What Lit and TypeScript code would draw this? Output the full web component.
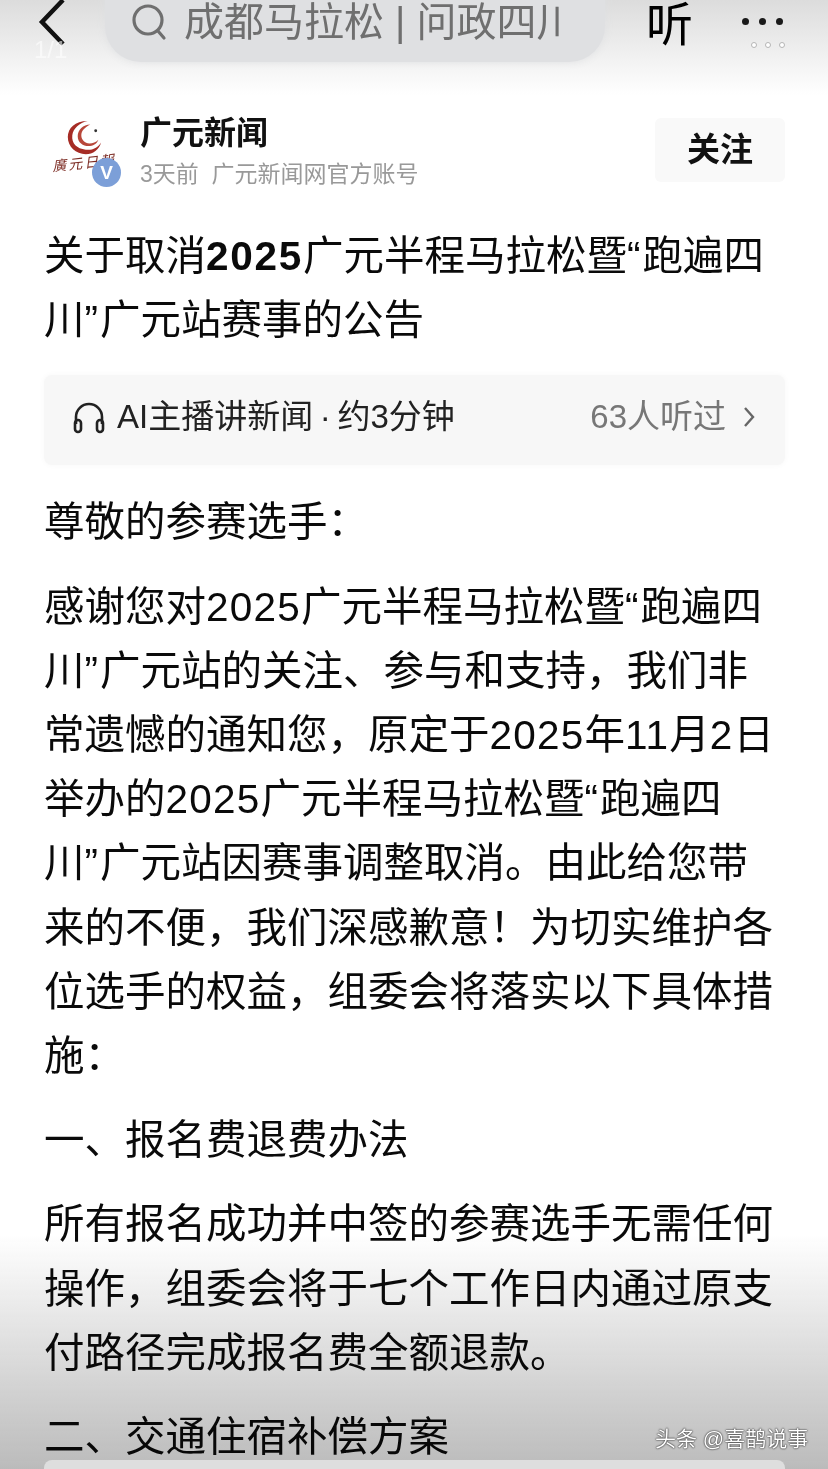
import { LitElement, html, css } from 'lit';
import { customElement } from 'lit/decorators.js';

const SECTIONS = [
  { gap: false, lines: ['尊敬的参赛选手：'] },
  {
    gap: true,
    lines: [
      '感谢您对2025广元半程马拉松暨“跑遍四',
      '川”广元站的关注、参与和支持，我们非',
      '常遗憾的通知您，原定于2025年11月2日',
      '举办的2025广元半程马拉松暨“跑遍四',
      '川”广元站因赛事调整取消。由此给您带',
      '来的不便，我们深感歉意！为切实维护各',
      '位选手的权益，组委会将落实以下具体措',
      '施：',
    ],
  },
  { gap: true, lines: ['一、报名费退费办法'] },
  {
    gap: true,
    lines: [
      '所有报名成功并中签的参赛选手无需任何',
      '操作，组委会将于七个工作日内通过原支',
      '付路径完成报名费全额退款。',
    ],
  },
  { gap: true, lines: ['二、交通住宿补偿方案'] },
];

// digits and quotes run a bit wider in the source than in Liberation Sans
function spaced(text: string) {
  return text.split(/([0-9]+|[“”])/).map((part) => {
    if (/^[0-9]+$/.test(part)) return html`<span class="num">${part}</span>`;
    if (part === '“' || part === '”') return html`<span class="quote">${part}</span>`;
    return part;
  });
}

@customElement('app-root')
export class AppRoot extends LitElement {
  static styles = css`
    :host {
      display: block;
      position: relative;
      width: 828px;
      height: 1469px;
      overflow: hidden;
      background: linear-gradient(#dcdcdc, #fff 95px);
      color: #111;
      font-family: 'Liberation Sans', 'Noto Sans CJK SC', sans-serif;
    }

    /* top bar, search pill is cut by the screen edge */
    .topbar {
      display: flex;
      align-items: flex-start;
      height: 118px;
      box-sizing: border-box;
      padding-left: 38px;
    }
    .back {
      flex: none;
      width: 30px;
      height: 48px;
      margin-top: -2px;
    }
    .search {
      flex: none;
      display: flex;
      align-items: center;
      width: 500px;
      height: 72px;
      margin-left: 37px;
      margin-top: -10px;
      padding: 0 38px 8px 26px;
      box-sizing: border-box;
      border-radius: 0 0 36px 36px;
      background: #dfe0e2;
      box-shadow: 0 0 8px #dfe0e2;
      color: #6f6f6f;
      overflow: hidden;
      white-space: nowrap;
    }
    .search svg {
      flex: none;
      width: 38px;
      height: 38px;
      margin-right: 15px;
    }
    .search-text {
      font-size: 40px;
      line-height: 44px;
      overflow: hidden;
    }
    .listen {
      flex: none;
      margin-left: 41px;
      margin-top: 1px;
      font-size: 47px;
      line-height: 48px;
      color: #000;
    }
    .more {
      flex: none;
      display: flex;
      flex-direction: column;
      align-items: flex-start;
      gap: 17px;
      margin-left: 49px;
      margin-top: 18px;
    }
    .dots {
      display: flex;
      gap: 10px;
    }
    .dots i {
      width: 7px;
      height: 7px;
      border-radius: 50%;
      background: #1a1a1a;
    }
    .dots.faint {
      gap: 8px;
      margin-left: 9px;
    }
    .dots.faint i {
      width: 6px;
      height: 6px;
      box-sizing: border-box;
      border: 1px solid #b5b5b5;
      background: #fff;
    }

    /* author row */
    .author {
      display: flex;
      align-items: center;
      height: 64px;
      padding: 0 43px 0 52px;
    }
    .avatar {
      position: relative;
      flex: none;
      width: 88px;
      height: 70px;
    }
    .avatar svg {
      position: absolute;
      left: 14px;
      top: 5px;
      width: 36px;
      height: 36px;
    }
    .avatar .brush {
      position: absolute;
      left: 0;
      top: 37px;
      font-family: 'Liberation Serif', 'Noto Sans CJK TC', serif;
      font-size: 14px;
      font-style: italic;
      letter-spacing: 2px;
      color: #7b2a22;
      transform: rotate(-6deg);
      white-space: nowrap;
    }
    .verified {
      position: absolute;
      left: 40px;
      top: 43px;
      width: 29px;
      height: 29px;
      border-radius: 50%;
      background: #7c9fd8;
      color: #fff;
      font-size: 19px;
      font-weight: 700;
      line-height: 29px;
      text-align: center;
    }
    .who {
      flex: 1;
      padding-top: 2px;
    }
    .name {
      font-size: 32px;
      font-weight: 700;
      line-height: 40px;
      color: #111;
    }
    .sub {
      margin-top: 5px;
      font-size: 23px;
      line-height: 32px;
      color: #999;
      white-space: pre;
    }
    .follow {
      flex: none;
      width: 130px;
      height: 64px;
      border-radius: 6px;
      background: #f9f9f9;
      font-size: 33px;
      font-weight: 700;
      line-height: 64px;
      text-align: center;
      color: #111;
    }

    /* article */
    .article {
      padding: 42px 43px 0 44px;
      font-size: 40.5px;
      line-height: 64.2px;
      color: #0a0a0a;
    }
    .line {
      white-space: nowrap;
    }
    .num {
      letter-spacing: 1.2px;
    }
    .quote {
      letter-spacing: 2px;
    }
    .title b {
      font-weight: 700;
      letter-spacing: 1.75px;
    }
    .audio {
      display: flex;
      align-items: center;
      height: 90px;
      margin: 23px 0 25px;
      padding: 0 30px 6px 28px;
      box-sizing: border-box;
      border-radius: 8px;
      background: #f7f7f7;
      box-shadow: 0 0 6px #f7f7f7;
      font-size: 33px;
      line-height: 40px;
    }
    .audio svg.phones {
      flex: none;
      width: 34px;
      height: 34px;
      margin-right: 11px;
    }
    .audio .label {
      flex: 1;
      color: #222;
      white-space: nowrap;
      word-spacing: -2.5px;
    }
    .audio .count {
      color: #777;
      white-space: nowrap;
    }
    .audio svg.chev {
      flex: none;
      width: 12px;
      height: 22px;
      margin-left: 17px;
    }
    .gap {
      margin-top: 20px;
    }

    /* overlays on top of the page */
    .shade-bottom {
      position: absolute;
      left: 0;
      right: 0;
      bottom: 0;
      height: 235px;
      background: linear-gradient(rgba(170, 170, 170, 0), rgba(170, 170, 170, 0.8));
      mix-blend-mode: multiply;
      pointer-events: none;
    }
    .next-box {
      position: absolute;
      left: 44px;
      right: 43px;
      top: 1460px;
      height: 20px;
      border-radius: 8px;
      background: #dedede;
    }
    .pager {
      position: absolute;
      left: 34px;
      top: 36px;
      font-size: 24px;
      line-height: 28px;
      color: rgba(255, 255, 255, 0.6);
    }
    .mark {
      position: absolute;
      left: 655px;
      top: 1425px;
      font-size: 21px;
      line-height: 28px;
      color: #fff;
      text-shadow: 0 0 2px #222, 0 0 1px #222;
      white-space: nowrap;
    }
  `;

  render() {
    return html`
      <div class="topbar">
        <svg class="back" viewBox="0 0 30 48" fill="none" stroke="#111" stroke-width="4.5">
          <path d="M25 2 4 24l21 22" />
        </svg>
        <div class="search">
          <svg viewBox="0 0 38 38" fill="none" stroke="#6f6f6f" stroke-width="3.2" stroke-linecap="round">
            <circle cx="17" cy="17" r="14" />
            <path d="m27 28 6 7" />
          </svg>
          <span class="search-text">成都马拉松 | 问政四川</span>
        </div>
        <div class="listen">听</div>
        <div class="more">
          <div class="dots"><i></i><i></i><i></i></div>
          <div class="dots faint"><i></i><i></i><i></i></div>
        </div>
      </div>

      <div class="author">
        <div class="avatar">
          <svg viewBox="0 0 40 40">
            <path d="M24 1C10 1 2 9 2 19c0 11 9 19 20 19 8 0 15-5 17-13-4 6-10 9-17 8C12 32 6 26 7 17 8 9 15 3 24 1Z" fill="#a62c25" />
            <path d="M27 5c-8 0-14 6-14 13 0 7 6 11 12 11 5 0 9-2 11-7-3 3-6 4-10 4-5 0-9-4-9-9 0-5 4-9 10-12Z" fill="#b8473a" />
            <circle cx="33" cy="12" r="1.6" fill="#333" />
          </svg>
          <span class="brush">廣元日報</span>
          <span class="verified">V</span>
        </div>
        <div class="who">
          <div class="name">广元新闻</div>
          <div class="sub">3天前  广元新闻网官方账号</div>
        </div>
        <div class="follow">关注</div>
      </div>

      <div class="article">
        <div class="title">
          <div class="line">关于取消<b>2025</b>广元半程马拉松暨<span class="quote">“</span>跑遍四</div>
          <div class="line">川<span class="quote">”</span>广元站赛事的公告</div>
        </div>

        <div class="audio">
          <svg class="phones" viewBox="0 0 34 34" fill="none" stroke="#222" stroke-width="2.6">
            <path d="M4 24V17a13 13 0 0 1 26 0v7" />
            <rect x="3" y="20" width="6" height="12" rx="3" />
            <rect x="25" y="20" width="6" height="12" rx="3" />
          </svg>
          <span class="label">AI主播讲新闻 · 约3分钟</span>
          <span class="count">63人听过</span>
          <svg class="chev" viewBox="0 0 12 22" fill="none" stroke="#666" stroke-width="2.4">
            <path d="m2 2 8 9-8 9" />
          </svg>
        </div>

        ${SECTIONS.map(
          (s) => html`
            <div class=${s.gap ? 'gap' : ''}>
              ${s.lines.map((l) => html`<div class="line">${spaced(l)}</div>`)}
            </div>
          `,
        )}
      </div>

      <div class="shade-bottom"></div>
      <div class="next-box"></div>
      <div class="pager">1/1</div>
      <div class="mark">头条 @喜鹊说事</div>
    `;
  }
}

declare global {
  interface HTMLElementTagNameMap {
    'app-root': AppRoot;
  }
}
